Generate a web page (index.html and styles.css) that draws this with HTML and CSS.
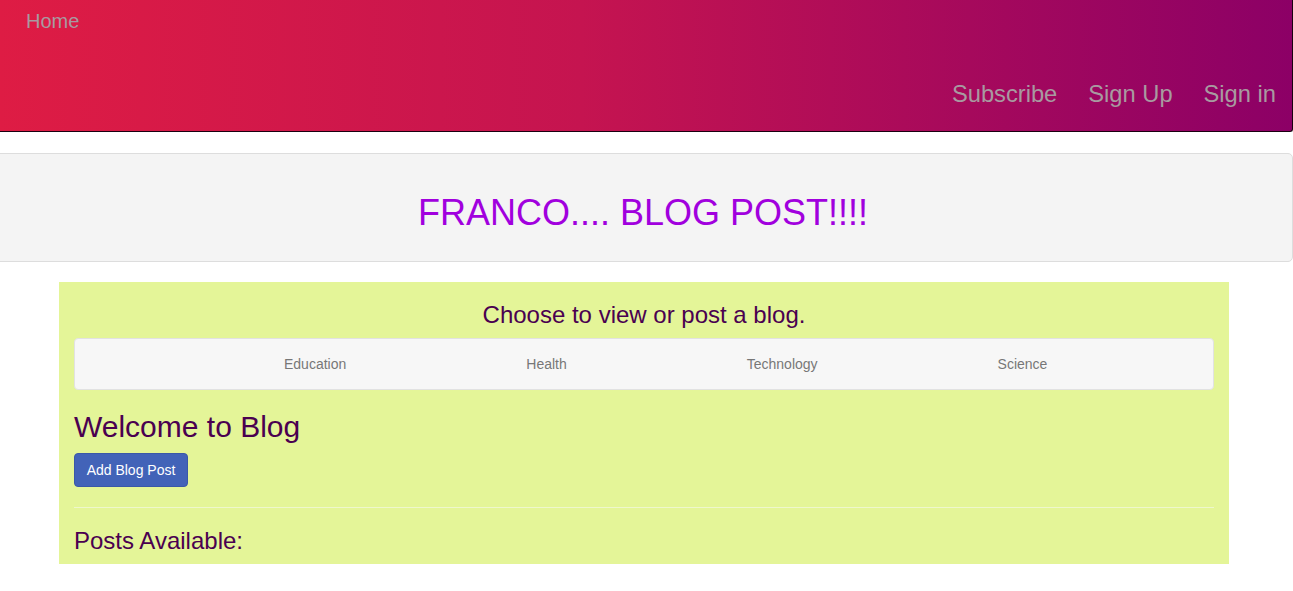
FILE: index.html
```html
<!DOCTYPE html>
<html>
<head>
<meta charset="utf-8">
<link rel="stylesheet" href="styles.css">
</head>
<body>
<header class="topbar">
  <a class="home" href="#">Home</a>
  <nav class="auth">
    <a href="#">Subscribe</a>
    <a href="#">Sign Up</a>
    <a href="#">Sign in</a>
  </nav>
</header>
<section class="jumbo">
  <h1>FRANCO.... BLOG POST!!!!</h1>
</section>
<main class="panel">
  <h3 class="lead">Choose to view or post a blog.</h3>
  <nav class="cats">
    <a href="#">Education</a>
    <a href="#">Health</a>
    <a href="#">Technology</a>
    <a href="#">Science</a>
  </nav>
  <h2 class="welcome">Welcome to Blog</h2>
  <button class="btn">Add Blog Post</button>
  <hr class="rule">
  <h3 class="posts">Posts Available:</h3>
</main>
</body>
</html>
```
FILE: styles.css
```css
* { box-sizing: border-box; }
body {
  margin: 0;
  font-family: "Liberation Sans", Arial, sans-serif;
  font-size: 14px;
  color: #333;
  background: #fff;
}
a { text-decoration: none; }
.topbar {
  height: 132px;
  width: 1293px;
  background: linear-gradient(to right, #de1c44 0%, #c51450 45%, #8c0066 100%);
  border-bottom: 1px solid #1a0010;
  border-right: 1px solid #1a0010;
  border-bottom-right-radius: 3px;
  display: flex;
  flex-direction: column;
  padding: 10px 16px 0 26px;
}
.home {
  color: #a89aa0;
  font-size: 20px;
  line-height: 22px;
}
.auth {
  display: flex;
  justify-content: flex-end;
  gap: 31px;
  margin-top: 47px;
}
.auth a {
  color: #a89aa0;
  font-size: 23.7px;
  line-height: 30px;
}
.jumbo {
  margin: 21px 0 0 -6px;
  width: 1299px;
  height: 109px;
  background: #f4f4f4;
  border: 1px solid #dddddd;
  border-radius: 5px;
  display: flex;
  align-items: center;
  justify-content: center;
  padding-right: 1px;
}
.jumbo h1 {
  margin: 0;
  font-weight: 400;
  font-size: 36px;
  color: #a100de;
  padding-top: 10px;
}
.panel {
  width: 1170px;
  margin: 20px 0 0 59px;
  background: #e4f598;
  padding: 1px 15px 0;
}
.lead {
  margin: 19px 0 10px;
  text-align: center;
  font-size: 24px;
  font-weight: 400;
  line-height: 26.4px;
  color: #4a0050;
}
.cats {
  display: flex;
  align-items: center;
  gap: 180px;
  height: 52px;
  padding-left: 209px;
  background: #f7f7f7;
  border: 1px solid #e2e2e2;
  border-radius: 4px;
  margin-bottom: 20px;
}
.cats a {
  color: #777;
  font-size: 14px;
  line-height: 20px;
}
.welcome {
  margin: 0 0 10px;
  font-size: 30px;
  font-weight: 400;
  line-height: 33px;
  color: #4a0050;
}
.btn {
  display: block;
  width: 114px;
  height: 34px;
  background: #4263b8;
  border: 1px solid #3a58a8;
  border-radius: 4px;
  color: #fff;
  font-family: inherit;
  font-size: 14px;
  padding: 0;
}
.rule {
  margin: 20px 0 20px;
  border: 0;
  border-top: 1px solid #eef7cc;
}
.posts {
  margin: 0;
  padding-bottom: 9px;
  font-size: 24px;
  font-weight: 400;
  line-height: 26.4px;
  color: #4a0050;
}
```
